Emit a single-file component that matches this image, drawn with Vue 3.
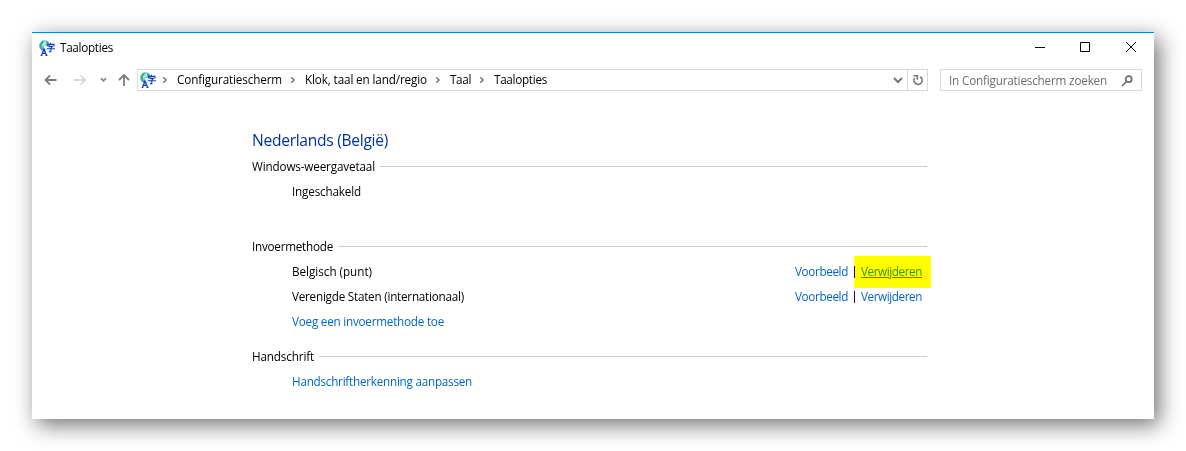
<script setup>
const crumbs = [
  { text: 'Configuratiescherm', width: 105 },
  { text: 'Klok, taal en land/regio', width: 122 },
  { text: 'Taal', width: 21 },
  { text: 'Taalopties', width: 53 },
]
const methods = [
  { name: 'Belgisch (punt)', width: 80, marked: true },
  { name: 'Verenigde Staten (internationaal)', width: 172, marked: false },
]

// Tracks a label so that it fills the given width.
const vFit = {
  mounted(el, { value }) {
    const natural = el.getBoundingClientRect().width
    el.style.letterSpacing = (value - natural) / el.textContent.length + 'px'
  },
}
</script>

<template>
  <main class="window">
    <header class="titlebar">
      <svg class="app-icon" viewBox="0 0 16 16"><use href="#language" /></svg>
      <span v-fit="53" class="label">Taalopties</span>
      <svg class="controls" width="104" height="12" viewBox="0 0 104 12" fill="none" stroke="#000">
        <path d="M0 5.5h10M45.5 .5h9v9h-9zM91 0l10 10M101 0l-10 10" />
      </svg>
    </header>

    <nav class="toolbar">
      <svg class="arrows" width="88" height="16" viewBox="0 0 88 16" fill="none" stroke="#7b7b7b" stroke-width="1.8">
        <path d="M1.3 8H12.5M6 3.5L1.5 8 6 12.5" />
        <path d="M30 8H41M36.7 3.5L41.2 8l-4.5 4.5" stroke="#dadada" />
        <path d="M57 6.3l2.5 2.5L62 6.3" stroke-width="1.6" />
        <path d="M80 14V3M75 8L80 3l5 5" />
      </svg>
      <div class="address">
        <svg class="app-icon" viewBox="0 0 16 16">
          <defs>
            <radialGradient id="globe" cx=".4" cy=".3" r=".75">
              <stop offset="0" stop-color="#d8f8ff" />
              <stop offset=".5" stop-color="#6cc8ec" />
              <stop offset="1" stop-color="#1c62b8" />
            </radialGradient>
          </defs>
          <g id="language">
            <circle cx="5.4" cy="5.4" r="5.3" fill="url(#globe)" />
            <path d="M.7 4.5L2.7 1.2 5.2.4 4.4 3 2.7 4.5 2.9 7 1.5 8.4zM7.5 .8l2 1.8-.8 1.8-1.5-1z" fill="#43ad62" />
            <path d="M5 6h5.5v5.5H7.5L5 8z" fill="#f2fcff" />
            <path d="M2.4 15.5L5 9.3 7.6 15.5M3.3 13.3h3.5M1.6 15.5h1.8M6.5 15.5h2" fill="none" stroke="#173fc4" stroke-width="1.3" />
            <path d="M11.5 2.8v1.4M8.5 6.2V4.4h6.6v1.8M9.3 6.4h4.4L11.8 8v3.6H10M7.8 8.7H16" fill="none" stroke="#173fc4" stroke-width="1.1" />
          </g>
        </svg>
        <template v-for="crumb in crumbs" :key="crumb.text">
          <svg class="sep" width="6" height="8" viewBox="0 0 6 8" fill="none" stroke="#777" stroke-width="1.5"><path d="M1.3 1.2L4 4 1.3 6.8" /></svg>
          <span v-fit="crumb.width" class="label">{{ crumb.text }}</span>
        </template>
        <svg class="drop" width="10" height="8" viewBox="0 0 10 8" fill="none" stroke="#777" stroke-width="2"><path d="M1 2l4 4 4-4" /></svg>
        <div class="refresh">
          <svg width="12" height="12" viewBox="0 0 12 12" fill="none" stroke="#777" stroke-width="1.6">
            <path d="M8.3 2.8A4.1 4.1 0 1 1 2.6 4.2" />
            <path d="M1.4 1.8h4v4" />
          </svg>
        </div>
      </div>
      <div class="search">
        <span v-fit="158" class="label">In Configuratiescherm zoeken</span>
        <svg class="lens" width="12" height="12" viewBox="0 0 12 12" fill="none" stroke="#6c6c6c" stroke-width="1.7">
          <circle cx="7.7" cy="4.2" r="3" /><path d="M5.5 6.5L1 11" />
        </svg>
      </div>
    </nav>

    <section class="content">
      <h1><span v-fit="136" class="label">Nederlands (België)</span></h1>
      <h2><span v-fit="123" class="label">Windows-weergavetaal</span></h2>
      <div class="row status"><span v-fit="69" class="label">Ingeschakeld</span></div>

      <h2><span v-fit="81" class="label">Invoermethode</span></h2>
      <div v-for="m in methods" :key="m.name" class="row">
        <span v-fit="m.width" class="label">{{ m.name }}</span>
        <div class="actions">
          <a v-fit="53" class="label">Voorbeeld</a>
          <i class="bar"></i>
          <a v-fit="61" class="label" :class="{ underlined: m.marked }">Verwijderen</a>
          <i v-if="m.marked" class="marker"></i>
        </div>
      </div>
      <div class="row add"><a v-fit="152" class="label">Voeg een invoermethode toe</a></div>

      <h2><span v-fit="62" class="label">Handschrift</span></h2>
      <div class="row"><a v-fit="180" class="label">Handschriftherkenning aanpassen</a></div>
    </section>
  </main>
</template>

<style>
body {
  background: #fff;
}
#app {
  display: flow-root;
  height: 451px;
  overflow: hidden;
}
</style>

<style scoped>
.window {
  box-sizing: border-box;
  width: 1122px;
  height: 387px;
  margin: 32px 32px 0;
  background: #fff;
  border-top: 1px solid #1883d7;
  box-shadow: 5px 6px 21px rgba(0, 0, 0, 0.56);
  font: 11.7px/16px "Open Sans", "Noto Sans", sans-serif;
  color: #000;
}
.label {
  flex: none;
  margin-bottom: 2px;
  white-space: nowrap;
}
svg {
  display: block;
  flex: none;
}
.app-icon {
  width: 16px;
  height: 16px;
}
.titlebar {
  display: flex;
  align-items: center;
  height: 30px;
  padding: 0 17px 0 7px;
}
.titlebar .label {
  margin-left: 5px;
}
.controls {
  margin-left: auto;
  margin-right: -2px;
}
.toolbar {
  display: flex;
  align-items: center;
  height: 22px;
  margin-top: 6px;
  padding: 0 12px;
}
.arrows {
  margin-right: 5px;
}
.address,
.search {
  box-sizing: border-box;
  display: flex;
  align-items: center;
  height: 22px;
  border: 1px solid #d9d9d9;
}
.address {
  width: 791px;
  padding-left: 2px;
}
.address .app-icon {
  margin-right: 1px;
}
.address .label {
  margin-bottom: 3px;
}
.sep {
  margin: 0 9px 0 8px;
}
.address .app-icon + .sep {
  margin-left: 5px;
}
.drop {
  margin-left: auto;
  margin-right: 4px;
}
.refresh {
  display: flex;
  align-items: center;
  justify-content: center;
  width: 19px;
  height: 20px;
  border-left: 1px solid #d9d9d9;
}
.search {
  justify-content: space-between;
  width: 202px;
  margin-left: 12px;
  padding: 0 8px;
  color: #6d6d6d;
}
.search .label {
  margin-bottom: 1px;
}
.lens {
  margin-top: 2px;
}
.content {
  width: 675px;
  margin: 34px 0 0 220px;
}
h1,
h2 {
  display: flex;
  align-items: center;
  margin: 0;
  font-weight: 400;
}
h1 {
  height: 29px;
  font-size: 15.6px;
  line-height: 22px;
  color: #003399;
}
h1 .label {
  margin-bottom: 0;
}
h2 {
  height: 25px;
  font-size: 11.7px;
}
h2::after {
  content: "";
  flex: 1;
  height: 1px;
  margin: 0 0 1px 5px;
  background: #ccc;
}
.row {
  display: flex;
  align-items: center;
  height: 25px;
  padding-left: 40px;
}
.status {
  margin-bottom: 30px;
}
.add {
  margin-bottom: 10px;
}
a {
  color: #0066cc;
}
.underlined {
  color: #339900;
  text-decoration: underline;
}
.actions {
  position: relative;
  display: flex;
  align-items: center;
  height: 16px;
  margin-left: auto;
  margin-right: 5px;
}
.bar {
  width: 1px;
  height: 12px;
  margin: 0 6px;
  background: #400040;
}
.marker {
  position: absolute;
  top: -8px;
  right: -9px;
  width: 77px;
  height: 32px;
  background: #ffff00;
  mix-blend-mode: multiply;
}
</style>
